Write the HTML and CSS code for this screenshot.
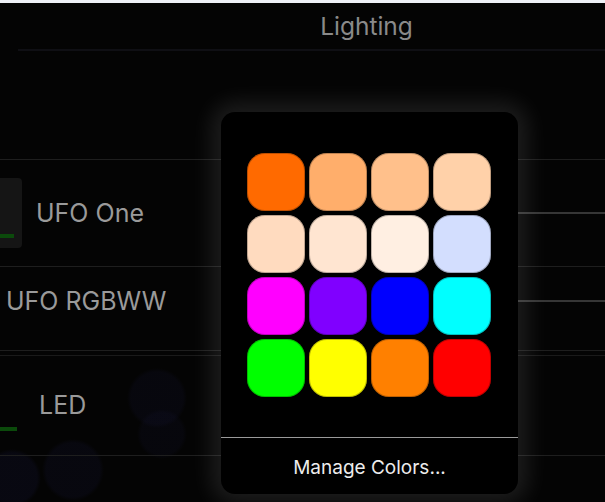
FILE: index.html
```html
<!DOCTYPE html>
<html lang="en">
<head>
<meta charset="utf-8">
<title>Lighting</title>
<link rel="stylesheet" href="styles.css">
</head>
<body>
<div class="strip"></div>
<header class="header"><h1 class="title">Lighting</h1></header>
<div class="hr"></div>
<main class="list">
  <div class="row row-empty"></div>
  <div class="row row-one">
    <div class="thumb thumb-dark"><span class="bar"></span></div>
    <span class="label label-one">UFO One</span>
    <span class="track"></span>
  </div>
  <div class="row row-rgb">
    <span class="label label-rgb">UFO RGBWW</span>
    <span class="track"></span>
  </div>
  <div class="row row-led">
    <div class="thumb"><span class="bar bar-wide"></span></div>
    <span class="label label-led">LED</span>
  </div>
</main>

<div class="popover">
  <div class="grid">
    <span class="sw" style="background:#ff6a00"></span>
    <span class="sw" style="background:#ffae6b"></span>
    <span class="sw" style="background:#ffc08b"></span>
    <span class="sw" style="background:#ffd1a9"></span>
    <span class="sw" style="background:#ffdbbf"></span>
    <span class="sw" style="background:#ffe5d1"></span>
    <span class="sw" style="background:#ffefe2"></span>
    <span class="sw" style="background:#d3defe"></span>
    <span class="sw" style="background:#ff00ff"></span>
    <span class="sw" style="background:#8000ff"></span>
    <span class="sw" style="background:#0000ff"></span>
    <span class="sw" style="background:#00ffff"></span>
    <span class="sw" style="background:#00ff00"></span>
    <span class="sw" style="background:#ffff00"></span>
    <span class="sw" style="background:#ff8000"></span>
    <span class="sw" style="background:#ff0000"></span>
  </div>
  <div class="pop-footer">Manage Colors...</div>
</div>
</body>
</html>
```

FILE: styles.css
```css
html, body {
  margin: 0;
  padding: 0;
}
body {
  width: 605px;
  height: 502px;
  overflow: hidden;
  position: relative;
  font-family: Inter, "Noto Sans", sans-serif;
  background-color: #040404;
  background-image:
    radial-gradient(circle at 157px 398px, rgba(24,24,64,0.16) 0, rgba(24,24,64,0.16) 26px, transparent 30px),
    radial-gradient(circle at 162px 434px, rgba(24,24,64,0.14) 0, rgba(24,24,64,0.14) 21px, transparent 25px),
    radial-gradient(circle at 73px 470px, rgba(24,24,64,0.18) 0, rgba(24,24,64,0.18) 27px, transparent 31px),
    radial-gradient(circle at 12px 478px, rgba(24,24,64,0.22) 0, rgba(24,24,64,0.22) 25px, transparent 29px);
}
.strip {
  height: 3px;
  background: #eef1f7;
}
.header {
  height: 46px;
  display: flex;
  align-items: center;
  justify-content: center;
  padding-left: 128px;
}
.title {
  margin: 0;
  font-size: 24.5px;
  font-weight: 400;
  color: #8a8a8a;
}
.hr {
  height: 2px;
  margin-left: 18px;
  background: #0f0f14;
}
.list {
  display: flex;
  flex-direction: column;
}
.row {
  display: flex;
  align-items: center;
  border-bottom: 1px solid #1e1e1e;
}
.row-empty {
  height: 108px;
}
.row-one {
  height: 106px;
}
.row-rgb {
  height: 83px;
  align-items: flex-start;
}
.row-led {
  height: 99px;
  margin-top: 4px;
  border-top: 1px solid #1a1a1a;
}
.thumb {
  width: 22px;
  height: 70px;
  border-radius: 0 4px 4px 0;
  display: flex;
  flex-direction: column;
  justify-content: flex-end;
  padding-bottom: 10px;
  box-sizing: border-box;
  flex: none;
}
.thumb-dark {
  background: #151515;
}
.bar {
  display: block;
  width: 14px;
  height: 4px;
  background: #0b4a0b;
}
.bar-wide {
  width: 17px;
}
.label {
  font-size: 25px;
  color: #9a9a9a;
  line-height: 1;
}
.label-one {
  margin-left: 14px;
}
.label-rgb {
  margin-left: 6px;
  margin-top: 22px;
}
.label-led {
  margin-left: 17px;
}
.track {
  margin-left: auto;
  width: 182px;
  height: 2px;
  background: #363636;
  flex: none;
}
.row-rgb .track {
  margin-top: 33px;
}

.popover {
  position: absolute;
  left: 221px;
  top: 112px;
  width: 297px;
  height: 382px;
  background: #000;
  border-radius: 14px;
  box-shadow: 0 0 22px 10px rgba(255,255,255,0.1);
  display: flex;
  flex-direction: column;
  overflow: hidden;
}
.grid {
  display: grid;
  grid-template-columns: repeat(4, 58px);
  grid-auto-rows: 58px;
  align-content: start;
  gap: 4px;
  padding: 41px 0 0 26px;
  height: 326px;
  box-sizing: border-box;
  border-bottom: 1px solid #9a9a9a;
  flex: none;
}
.sw {
  display: block;
  border-radius: 18px;
  box-shadow: inset 0 0 0 1px rgba(0,0,0,0.25);
}
.pop-footer {
  flex: 1;
  display: flex;
  align-items: center;
  justify-content: center;
  padding-top: 3px;
  font-size: 19px;
  color: #ececec;
}
```
